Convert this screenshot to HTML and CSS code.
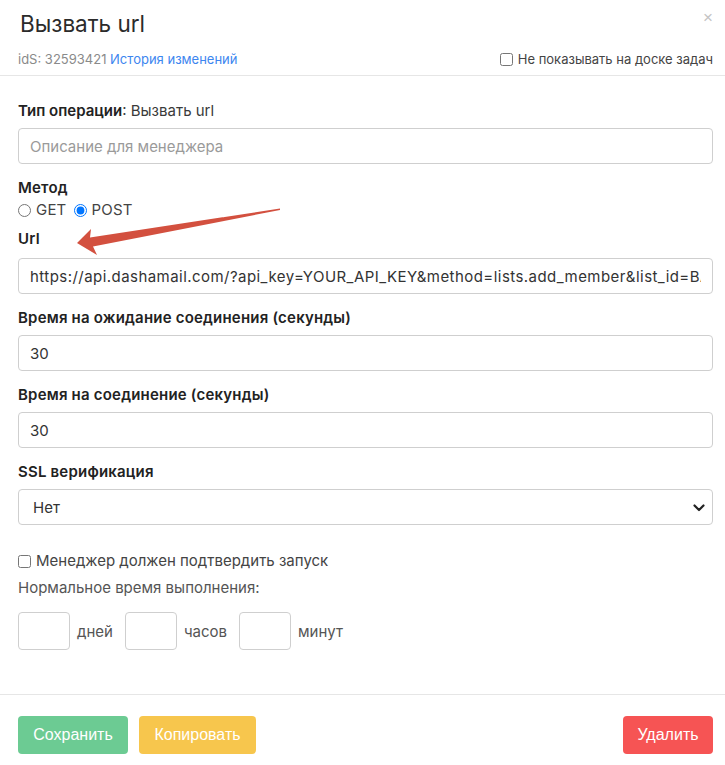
FILE: index.html
```html
<!DOCTYPE html>
<html lang="ru">
<head>
<meta charset="utf-8">
<title>Вызвать url</title>
<link rel="stylesheet" href="styles.css">
</head>
<body>
<div class="modal">
  <header class="modal-header">
    <div class="title-row">
      <h1 class="title">Вызвать url</h1>
      <span class="close">&times;</span>
    </div>
    <div class="meta-row">
      <div class="meta-ids">idS: 32593421 <a class="link" href="#">История изменений</a></div>
      <label class="hide-check"><input type="checkbox"> Не показывать на доске задач</label>
    </div>
  </header>

  <main class="modal-body">
    <div class="op-type"><b>Тип операции</b>: Вызвать url</div>
    <input class="field field-first" type="text" placeholder="Описание для менеджера">

    <div class="group">
      <div class="label">Метод</div>
      <div class="radios">
        <label class="radio"><input type="radio" name="method"> GET</label>
        <label class="radio"><input type="radio" name="method" checked> POST</label>
      </div>
    </div>

    <div class="group group-url">
      <div class="label">Url</div>
      <input class="field field-url" type="text" value="https://api.dashamail.com/?api_key=YOUR_API_KEY&amp;method=lists.add_member&amp;list_id=BASE_ID">
    </div>

    <div class="group">
      <div class="label">Время на ожидание соединения (секунды)</div>
      <input class="field" type="text" value="30">
    </div>

    <div class="group">
      <div class="label">Время на соединение (секунды)</div>
      <input class="field" type="text" value="30">
    </div>

    <div class="group">
      <div class="label">SSL верификация</div>
      <div class="select-wrap">
        <select class="field select">
          <option>Нет</option>
          <option>Да</option>
        </select>
        <svg class="chevron" width="12" height="8" viewBox="0 0 12 8"><path d="M1.5 1.5 L6 6 L10.5 1.5" fill="none" stroke="#222" stroke-width="2.2" stroke-linecap="round" stroke-linejoin="round"/></svg>
      </div>
    </div>

    <label class="confirm"><input type="checkbox"> Менеджер должен подтвердить запуск</label>
    <div class="normal-time">Нормальное время выполнения:</div>
    <div class="duration">
      <input class="small-field" type="text"><span class="unit">дней</span>
      <input class="small-field" type="text"><span class="unit">часов</span>
      <input class="small-field" type="text"><span class="unit">минут</span>
    </div>
  </main>

  <footer class="modal-footer">
    <div class="btns-left">
      <button class="btn btn-save">Сохранить</button>
      <button class="btn btn-copy">Копировать</button>
    </div>
    <button class="btn btn-delete">Удалить</button>
  </footer>

  <svg class="pointer-arrow" width="725" height="765" viewBox="0 0 725 765">
    <polygon points="77,243 91,229 90,237.5 280,208.5 280,210 93,246.5 97,255" fill="#d3503f"/>
  </svg>
</div>
</body>
</html>
```
FILE: styles.css
```css
* { box-sizing: border-box; }

html, body {
  margin: 0;
  padding: 0;
  background: #fff;
}

body {
  font-family: Inter, "Noto Sans", sans-serif;
  color: #333;
  font-size: 15px;
}

.modal {
  position: relative;
  width: 725px;
  height: 765px;
  overflow: hidden;
}

/* header */
.modal-header {
  padding: 9px 12px 0 20px;
  border-bottom: 1px solid #e6e6e6;
  height: 76px;
}

.title-row {
  display: flex;
  justify-content: space-between;
  align-items: flex-start;
}

.title {
  margin: 0;
  font-size: 22.5px;
  font-weight: 400;
  line-height: 30px;
  color: #2b2b2b;
}

.close {
  font-family: "Liberation Sans", Arial, sans-serif;
  font-size: 17px;
  line-height: 20px;
  color: #c4c4c4;
  margin-top: -1px;
}

.meta-row {
  display: flex;
  justify-content: space-between;
  align-items: center;
  margin-top: 11px;
  font-size: 13px;
  line-height: 18px;
  margin-left: -2px;
}

.meta-ids { color: #8a8a8a; }

.link {
  color: #3d86ef;
  text-decoration: none;
}

.hide-check {
  display: flex;
  align-items: center;
  gap: 5px;
  color: #444;
  white-space: nowrap;
}

.hide-check input { margin: 0; width: 13px; height: 13px; }

/* body */
.modal-body {
  padding: 25px 12px 0 18px;
  height: 618px;
}

.op-type {
  line-height: 20px;
  color: #3a3a3a;
}

.op-type b,
.label {
  font-weight: 600;
  color: #222;
}

.label {
  line-height: 20px;
  letter-spacing: 0.2px;
}

.field {
  display: block;
  width: 695px;
  height: 36px;
  margin-top: 7px;
  padding: 0 11px;
  border: 1px solid #cfcfcf;
  border-radius: 4px;
  font: inherit;
  color: #333;
  background: #fff;
  outline: none;
}

.field::placeholder { color: #9a9a9a; }

.field-url { letter-spacing: 0.45px; }

.group { margin-top: 14px; }

.group-url { margin-top: 7px; }
.group-url .field { margin-top: 9px; }

.radios {
  display: flex;
  gap: 7px;
  line-height: 24px;
  color: #444;
}

.radio {
  display: flex;
  align-items: center;
  gap: 5px;
  letter-spacing: 0.2px;
}

.radio input {
  margin: 0;
  width: 13px;
  height: 13px;
}

.select-wrap { position: relative; }

.select {
  appearance: none;
  -webkit-appearance: none;
  padding-left: 14px;
}

.chevron {
  position: absolute;
  right: 8px;
  top: 15px;
}

.confirm {
  display: flex;
  align-items: center;
  gap: 5px;
  margin-top: 26px;
  line-height: 20px;
  color: #444;
}

.confirm input { margin: 0; width: 13px; height: 13px; }

.normal-time {
  margin-top: 7px;
  line-height: 20px;
  color: #555;
}

.duration {
  display: flex;
  align-items: center;
  margin-top: 14px;
  color: #555;
}

.small-field {
  width: 52px;
  height: 38px;
  border: 1px solid #cfcfcf;
  border-radius: 4px;
  outline: none;
}

.unit { margin: 0 12px 0 7px; }

/* footer */
.modal-footer {
  border-top: 1px solid #e6e6e6;
  display: flex;
  justify-content: space-between;
  padding: 21px 12px 0 18px;
}

.btns-left { display: flex; gap: 11px; }

.btn {
  height: 38px;
  border: none;
  border-radius: 4px;
  color: #fff;
  font-family: "Liberation Sans", Arial, sans-serif;
  font-size: 16px;
  padding: 0 13px;
}

.btn-save { background: #6ccb93; width: 110px; }
.btn-copy { background: #f7c64d; width: 117px; }
.btn-delete { background: #f65454; width: 90px; }

/* annotation arrow over the form */
.pointer-arrow {
  position: absolute;
  left: 0;
  top: 0;
  pointer-events: none;
}
```
